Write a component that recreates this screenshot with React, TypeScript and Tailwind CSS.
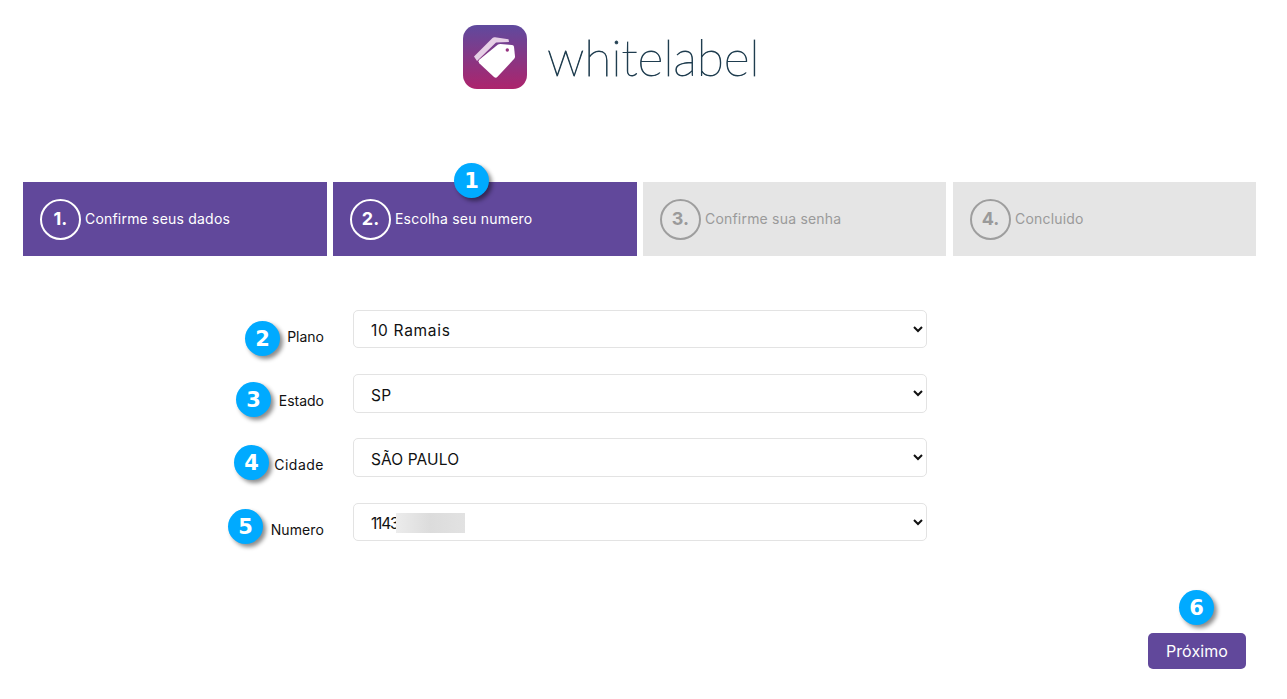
const sans = "font-['Inter','Liberation_Sans',sans-serif]";

function Badge({ n, className }: { n: number; className: string }) {
  return (
    <span
      className={`absolute z-10 flex h-[35px] w-[35px] items-center justify-center rounded-full bg-[#00aaff] pt-[2px] text-[21px] font-bold leading-none text-white shadow-[3px_3px_4px_rgba(0,0,0,0.45)] font-['DejaVu_Sans',sans-serif] ${className}`}
    >
      {n}
    </span>
  );
}

function Logo() {
  return (
    <div className="flex items-center pl-[463px] pt-[25px]">
      <svg width="64" height="64" viewBox="0 0 64 64" className="shrink-0 blur-[0.4px]">
        <defs>
          <linearGradient id="logoBg" x1="0" y1="0" x2="0" y2="1">
            <stop offset="0" stopColor="#5f4a9e" />
            <stop offset="1" stopColor="#ad246c" />
          </linearGradient>
        </defs>
        <rect width="64" height="64" rx="14" fill="url(#logoBg)" />
        <path d="M11 31.5 L29.5 13 Q30.5 12 32 12.2 L45.5 14.2 L46 17 L33 17.5 L14 36 Z" fill="#e6cfe6" />
        <path
          d="M16.5 34.5 L35 19.5 Q36 18.8 37.5 18.9 L49 20 Q50.8 20.2 51 21.8 L52 31.5 Q52.1 32.8 51.2 33.8 L34.5 51.8 Q32.8 53.5 31 51.9 L16.5 38.5 Q14.6 36.2 16.5 34.5 Z"
          fill="#ffffff"
        />
        <circle cx="44.3" cy="25" r="1.7" fill="#96307f" />
      </svg>
      <span className="ml-[20px] font-['Lato',sans-serif] text-[50px] font-thin leading-[64px] tracking-[-0.2px] text-[#1f3d4f] [-webkit-text-stroke:0.8px_#1f3d4f]">
        whitelabel
      </span>
    </div>
  );
}

const steps = [
  { n: "1.", label: "Confirme seus dados", active: true },
  { n: "2.", label: "Escolha seu numero", active: true },
  { n: "3.", label: "Confirme sua senha", active: false },
  { n: "4.", label: "Concluido", active: false },
];

function Steps() {
  return (
    <div className="ml-[23px] mt-[93px] grid w-[1233px] grid-cols-[304px_304px_303px_304px] gap-[6px]">
      {steps.map((s, i) => (
        <div
          key={s.n}
          className={`relative flex h-[74px] items-center pl-[17px] ${i === 3 ? "ml-[1px]" : ""} ${
            s.active ? "bg-[#61489b] text-white" : "bg-[#e5e5e5] text-[#9a9a9a]"
          }`}
        >
          <span
            className={`flex h-[41px] w-[41px] shrink-0 items-center justify-center rounded-full border-2 pb-[2px] text-[18px] font-bold ${
              s.active ? "border-white" : "border-[#9e9e9e]"
            }`}
          >
            {s.n}
          </span>
          <span className="mb-[2px] ml-[4px] text-[14px] tracking-[0.2px]">{s.label}</span>
          {i === 1 && <Badge n={1} className="left-[121px] top-[-19px]" />}
        </div>
      ))}
    </div>
  );
}

const fields = [
  { label: "Plano", value: "10 Ramais", badge: 2, pos: "left-[222px] top-[11px]", labelTrack: "tracking-[0px]", track: "tracking-[0.7px]" },
  { label: "Estado", value: "SP", badge: 3, pos: "left-[213px] top-[8px]", labelTrack: "tracking-[0px]", track: "tracking-[0.2px]" },
  { label: "Cidade", value: "SÃO PAULO", badge: 4, pos: "left-[211px] top-[7px]", labelTrack: "tracking-[0.5px]", track: "tracking-[0.1px]" },
  { label: "Numero", value: "1143", badge: 5, pos: "left-[205px] top-[6px]", labelTrack: "tracking-[0.1px]", track: "tracking-[-1.2px]" },
];

function Form() {
  return (
    <div className="ml-[23px] mt-[53.8px] flex flex-col gap-[25.93px]">
      {fields.map((f) => (
        <div key={f.label} className="relative flex h-[38.4px]">
          <Badge n={f.badge} className={f.pos} />
          <label className={`w-[301px] pt-[17px] text-right text-[14px] leading-[20px] text-[#111] ${f.labelTrack}`}>
            {f.label}
          </label>
          <div className="relative ml-[29px] w-[574px]">
            <select
              defaultValue={f.value}
              className={`h-full w-full rounded-[5px] border border-[#e3e3e3] bg-white pl-[13px] pr-[3px] pt-[4px] text-[15.5px] text-[#111] ${f.track}`}
            >
              <option>{f.value}</option>
            </select>
            {f.label === "Numero" && (
              <span className="absolute left-[43px] top-[10px] h-[20px] w-[69px] bg-gradient-to-r from-[#ececec] via-[#dcdcdc] to-[#e2e2e2]" />
            )}
          </div>
        </div>
      ))}
    </div>
  );
}

export default function App() {
  return (
    <div className={`min-h-[699px] bg-white ${sans}`}>
      <Logo />
      <Steps />
      <Form />
      <div className="relative mt-[91.8px] flex justify-end pb-[30px] pr-[41px]">
        <button className="relative h-[36px] w-[98px] rounded-[5px] bg-[#61489b] text-[16px] tracking-[0.1px] text-white">
          Próximo
          <Badge n={6} className="left-[31px] top-[-43px]" />
        </button>
      </div>
    </div>
  );
}
